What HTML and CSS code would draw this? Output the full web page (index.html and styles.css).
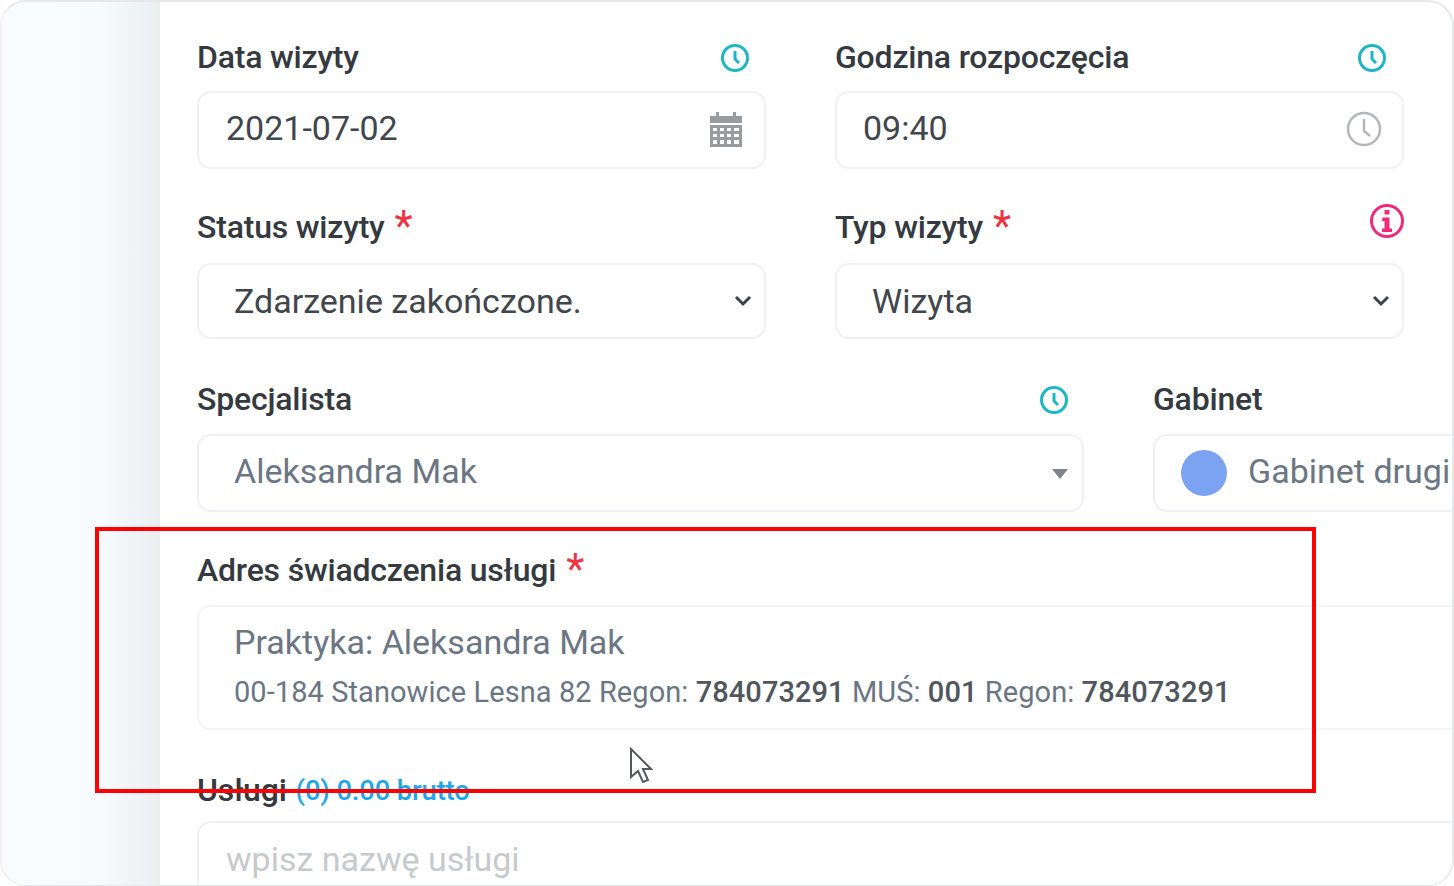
FILE: index.html
```html
<!DOCTYPE html>
<html lang="pl">
<head>
  <meta charset="UTF-8">
  <title>Wizyta</title>
  <link rel="stylesheet" href="styles.css">
</head>
<body>

<div class="frame">
  <div class="side"></div>

  <div class="form">
    <div class="row row-first">
      <div class="col col-half">
        <div class="label">
          <span>Data wizyty</span>
          <svg class="icon-teal push" viewBox="0 0 30 30"><circle cx="15" cy="15" r="12.5"/><path d="M15 8v8l4 4"/></svg>
        </div>
        <div class="field field-date">
          <span class="value">2021-07-02</span>
          <svg class="cal" viewBox="0 0 32 36">
            <path d="M0 5h6V1h3v4h14V1h3v4h6v7H0z"/>
            <path d="M0 14h32v22H0zM3 17v3h4v-3zm7 0v3h4v-3zm7 0v3h4v-3zm7 0v3h5v-3zM3 23v3h4v-3zm7 0v3h4v-3zm7 0v3h4v-3zm7 0v3h5v-3zM3 29v4h4v-4zm7 0v4h4v-4zm7 0v4h4v-4zm7 0v4h5v-4z" fill-rule="evenodd"/>
          </svg>
        </div>
      </div>
      <div class="col col-half">
        <div class="label">
          <span>Godzina rozpoczęcia</span>
          <svg class="icon-teal push" viewBox="0 0 30 30"><circle cx="15" cy="15" r="12.5"/><path d="M15 8v8l4 4"/></svg>
        </div>
        <div class="field field-date">
          <span class="value value-time">09:40</span>
          <svg class="clock-grey" viewBox="0 0 36 36"><circle cx="18" cy="18" r="16"/><path d="M18 8v12l6 5"/></svg>
        </div>
      </div>
    </div>

    <div class="row row-second">
      <div class="col col-half">
        <div class="label">
          <span>Status wizyty</span>
          <span class="req">*</span>
        </div>
        <div class="field field-select">
          <span class="value value-select">Zdarzenie zakończone.</span>
          <svg class="chevron" viewBox="0 0 18 12"><path d="M2 2l7 7 7-7"/></svg>
        </div>
      </div>
      <div class="col col-half">
        <div class="label">
          <span>Typ wizyty</span>
          <span class="req">*</span>
          <svg class="icon-pink push" viewBox="0 0 36 36">
            <circle cx="18" cy="18" r="15.5"/>
            <path class="icon-pink-dot" d="M15.5 7h5v4.500h-5zM13.500 14.500h7v11h2.500v3.500h-10v-3.500h2.500v-7.500h-2.500z"/>
          </svg>
        </div>
        <div class="field field-select">
          <span class="value value-select">Wizyta</span>
          <svg class="chevron" viewBox="0 0 18 12"><path d="M2 2l7 7 7-7"/></svg>
        </div>
      </div>
    </div>

    <div class="row row-third">
      <div class="col col-wide">
        <div class="label">
          <span>Specjalista</span>
          <svg class="icon-teal push" viewBox="0 0 30 30"><circle cx="15" cy="15" r="12.5"/><path d="M15 8v8l4 4"/></svg>
        </div>
        <div class="field field-date field-muted">
          <span class="value value-select">Aleksandra Mak</span>
          <span class="caret"></span>
        </div>
      </div>
      <div class="col col-room">
        <div class="label"><span>Gabinet</span></div>
        <div class="field field-date field-muted field-room">
          <span class="dot"></span>
          <span class="value">Gabinet drugi</span>
        </div>
      </div>
    </div>

    <div class="row">
      <div class="col col-full">
        <div class="label">
          <span>Adres świadczenia usługi</span>
          <span class="req">*</span>
        </div>
        <div class="field-address">
          <div class="address-name">Praktyka: Aleksandra Mak</div>
          <div class="address-line">00-184 Stanowice Lesna 82 Regon: <b>784073291</b> MUŚ: <b>001</b> Regon: <b>784073291</b></div>
        </div>
      </div>
    </div>

    <div class="row row-services">
      <div class="col col-full">
        <div class="label label-services">
          <span>Usługi</span>
          <span class="sum">(0) 0.00 brutto</span>
        </div>
        <div class="field field-search">
          <span class="placeholder">wpisz nazwę usługi</span>
        </div>
      </div>
    </div>
  </div>

  <div class="highlight"></div>
  <svg class="cursor" viewBox="0 0 24 38"><path d="M2 2v28l7-6 5 11 5-2-5-11h8z"/></svg>
</div>

</body>
</html>
```

FILE: styles.css
```css
* {
  box-sizing: border-box;
}

body {
  margin: 0;
  background-color: #fff;
  font-family: Roboto, "Liberation Sans", sans-serif;
  overflow: hidden;
}

.frame {
  position: relative;
  display: flex;
  width: 1454px;
  height: 886px;
  overflow: hidden;
  border: 2px solid #e6e8ea;
  border-left-color: #eef0f1;
  border-bottom-width: 1px;
  border-radius: 26px;
}

.side {
  flex: 0 0 158px;
  background: linear-gradient(to right, #f9fcfd 0, #f8fbfd 60%, #eceff0 100%);
}

.form {
  flex: 1;
  min-width: 0;
  padding: 37px 0 0 37px;
  overflow: hidden;
}

.row {
  display: flex;
  gap: 69px;
  margin-top: 40px;
}

.row-first {
  margin-top: 0;
}

.row-first .label {
  margin-bottom: 16px;
}

.row-second .label {
  margin-bottom: 18px;
}

.row-third {
  margin-top: 42px;
}

.row-services {
  margin-top: 42px;
}

.col-half {
  flex: 0 0 569px;
}

.col-wide {
  flex: 0 0 887px;
}

.col-room {
  flex: 0 0 400px;
}

.col-full {
  flex: 0 0 1300px;
}

.label {
  display: flex;
  align-items: center;
  gap: 10px;
  height: 36px;
  margin-bottom: 17px;
  color: #343a40;
  font-size: 32px;
  font-weight: 500;
  letter-spacing: -0.2px;
}

.label-services {
  gap: 9px;
}

.row .label-services {
  margin-bottom: 13px;
}

.push {
  margin-left: auto;
}

.req {
  align-self: flex-start;
  margin-top: -3px;
  color: #ef3340;
  font-size: 42px;
  line-height: 40px;
  font-weight: 400;
}

.sum {
  color: #1ea7e8;
  font-size: 27.5px;
}

.icon-teal {
  width: 30px;
  height: 30px;
  margin-top: 2px;
  margin-right: 16px;
  fill: none;
  stroke: #1fb6c4;
  stroke-width: 3;
}

.col-half + .col-half .icon-teal {
  margin-right: 17px;
}

.col-wide .icon-teal {
  margin-right: 15px;
}

.icon-pink {
  width: 36px;
  height: 36px;
  margin-top: -12px;
  margin-right: -1px;
  fill: none;
  stroke: #ef2a78;
  stroke-width: 3;
}

.icon-pink-dot {
  fill: #ef2a78;
  stroke: none;
}

.field {
  display: flex;
  align-items: center;
  border: 2px solid #eff1f4;
  border-radius: 14px;
  background-color: #fff;
}

.field-date {
  height: 78px;
  padding: 0 20px 4px 27px;
}

.field-select {
  height: 76px;
  padding: 0 12px 0 27px;
}

.field-muted .value {
  color: #6b7684;
}

.field-room {
  padding-left: 26px;
}

.field-search {
  height: 90px;
  padding: 0 0 14px 27px;
}

.value {
  color: #41464c;
  font-size: 34px;
}

.value-select {
  margin-left: 8px;
}

.value-time {
  margin-left: -1px;
}

.cal {
  width: 32px;
  height: 36px;
  margin-top: 2px;
  margin-right: 2px;
  margin-left: auto;
  fill: #999c9f;
}

.clock-grey {
  width: 36px;
  height: 36px;
  margin-top: 2px;
  margin-left: auto;
  fill: none;
  stroke: #b4b6ba;
  stroke-width: 2.5;
}

.chevron {
  width: 18px;
  height: 12px;
  margin-left: auto;
  fill: none;
  stroke: #3d4247;
  stroke-width: 3;
}

.caret {
  width: 0;
  height: 0;
  margin-top: 6px;
  margin-left: auto;
  margin-right: -6px;
  border-left: 8px solid transparent;
  border-right: 8px solid transparent;
  border-top: 10px solid #808488;
}

.dot {
  flex: 0 0 46px;
  height: 46px;
  margin-top: 4px;
  margin-right: 21px;
  border-radius: 50%;
  background-color: #7ba3f2;
}

.field-address {
  height: 125px;
  padding: 15px 0 0 35px;
  border: 2px solid #f3f4f6;
  border-radius: 14px;
  color: #6b7684;
}

.address-name {
  font-size: 34px;
  line-height: 40px;
}

.address-line {
  margin-top: 12px;
  font-size: 29px;
  line-height: 36px;
  letter-spacing: 0.07px;
}

.address-line b {
  color: #50565d;
  font-weight: 500;
}

.placeholder {
  color: #c6cacd;
  font-size: 34px;
}

.highlight {
  position: absolute;
  left: 93px;
  top: 525px;
  width: 1221px;
  height: 266px;
  border: 4px solid #f00;
}

.cursor {
  position: absolute;
  left: 627px;
  top: 745px;
  width: 24px;
  height: 38px;
  fill: #fff;
  stroke: #55595e;
  stroke-width: 2;
}
```
